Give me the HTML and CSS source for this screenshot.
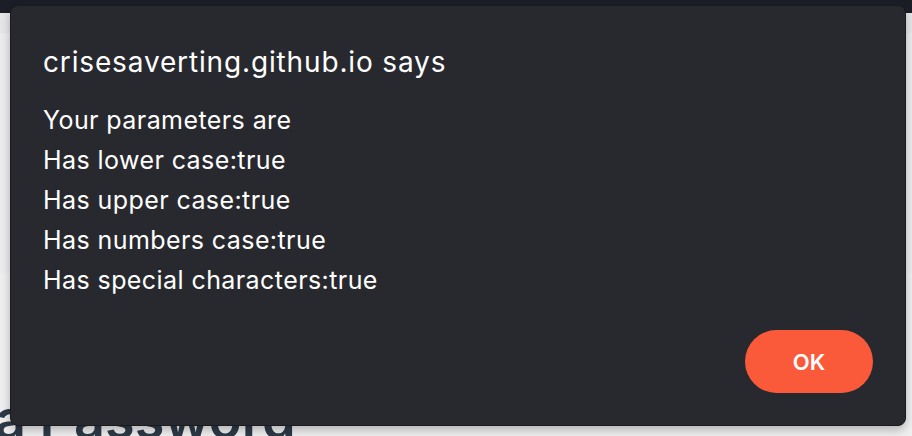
FILE: index.html
```html
<!DOCTYPE html>
<html>
<head>
<meta charset="utf-8">
<link rel="stylesheet" href="styles.css">
</head>
<body>
<div class="page">
  <div class="topbar"></div>
  <div class="band"></div>
  <div class="upper"></div>
  <div class="lower">
    <h1 class="heading">a Password</h1>
  </div>
</div>
<div class="dialog">
  <div class="title">crisesaverting.github.io says</div>
  <div class="message">
    <div class="line">Your parameters are</div>
    <div class="line">Has lower case:true</div>
    <div class="line">Has upper case:true</div>
    <div class="line">Has numbers case:true</div>
    <div class="line">Has special characters:true</div>
  </div>
  <div class="actions">
    <button class="ok">OK</button>
  </div>
</div>
</body>
</html>
```
FILE: styles.css
```css
html, body {
  margin: 0;
  padding: 0;
  width: 912px;
  height: 436px;
  overflow: hidden;
  background: #ececec;
  font-family: Inter, "Noto Sans", sans-serif;
}
.page {
  display: flex;
  flex-direction: column;
  height: 436px;
}
.topbar {
  height: 13px;
  background: #1c1e27;
}
.band {
  height: 20px;
  background: #e6e6e9;
}
.upper {
  height: 240px;
  background: #ececee;
}
.lower {
  flex: 1;
  background: #efefef;
  display: flex;
  align-items: flex-end;
}
.heading {
  margin: 0 0 -14px -5px;
  font-size: 54px;
  font-weight: 600;
  color: #2c3946;
  line-height: 60px;
}
.dialog {
  position: absolute;
  left: 10px;
  top: 5px;
  width: 896px;
  height: 421px;
  box-sizing: border-box;
  background: #28292e;
  border: 1px solid #1a1b1f;
  border-radius: 8px;
  box-shadow: 0 4px 10px rgba(0,0,0,0.25);
  padding: 40px 32px 32px 32px;
  display: flex;
  flex-direction: column;
  color: #ffffff;
}
.title {
  font-size: 28px;
  line-height: 32px;
  font-weight: 400;
  letter-spacing: 0.85px;
}
.message {
  margin-top: 22px;
  display: flex;
  flex-direction: column;
}
.line {
  font-size: 25px;
  line-height: 40px;
  font-weight: 400;
  letter-spacing: 0.42px;
}
.actions {
  margin-top: auto;
  display: flex;
  justify-content: flex-end;
}
.ok {
  width: 128px;
  height: 63px;
  border: none;
  border-radius: 32px;
  background: #fb5a3a;
  color: #ffffff;
  font-family: Inter, "Noto Sans", sans-serif;
  font-size: 22px;
  font-weight: 600;
  margin-bottom: 0;
}
```
